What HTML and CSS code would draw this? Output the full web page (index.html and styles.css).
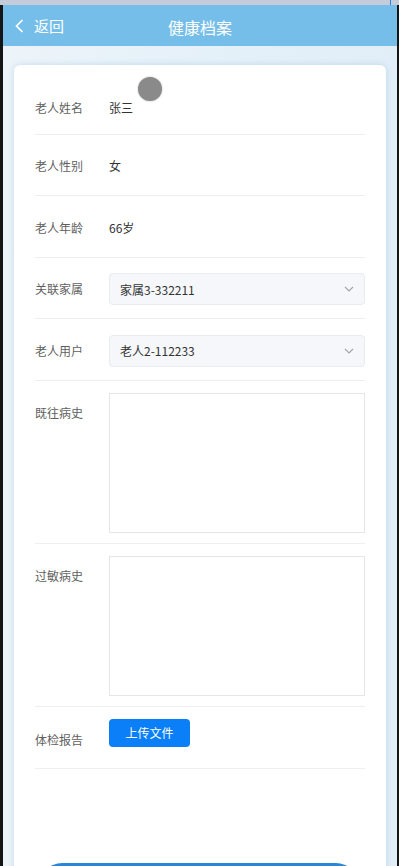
FILE: index.html
```html
<!DOCTYPE html>
<html lang="zh-CN">
<head>
  <meta charset="UTF-8" />
  <meta name="viewport" content="width=device-width, initial-scale=1.0"/>
  <title>健康档案</title>
  <link rel="stylesheet" href="styles.css">
</head>
<body>

  <div class="desk"><span class="desk-mark"></span></div>

  <div class="frame">
    <div class="header">
      <a class="back" href="#">
        <svg width="9" height="14" viewBox="0 0 9 14"><polyline points="7.5,1 1.5,7 7.5,13" fill="none" stroke="#fff" stroke-width="1.7"/></svg>
        <span>返回</span>
      </a>
      <div class="title">健康档案</div>
    </div>

    <div class="card">
      <div class="touch"></div>

      <div class="row row-first">
        <div class="label">老人姓名</div>
        <div class="value">张三</div>
      </div>
      <div class="row">
        <div class="label">老人性别</div>
        <div class="value">女</div>
      </div>
      <div class="row">
        <div class="label">老人年龄</div>
        <div class="value">66岁</div>
      </div>
      <div class="row">
        <div class="label">关联家属</div>
        <div class="select">
          <span>家属3-332211</span>
          <svg width="10" height="6" viewBox="0 0 10 6"><polyline points="1,1 5,5 9,1" fill="none" stroke="#a0a4aa" stroke-width="1.1"/></svg>
        </div>
      </div>
      <div class="row">
        <div class="label">老人用户</div>
        <div class="select">
          <span>老人2-112233</span>
          <svg width="10" height="6" viewBox="0 0 10 6"><polyline points="1,1 5,5 9,1" fill="none" stroke="#a0a4aa" stroke-width="1.1"/></svg>
        </div>
      </div>
      <div class="row row-top">
        <div class="label">既往病史</div>
        <div class="textarea"></div>
      </div>
      <div class="row row-top">
        <div class="label">过敏病史</div>
        <div class="textarea"></div>
      </div>
      <div class="row row-upload">
        <div class="label">体检报告</div>
        <button class="upload">上传文件</button>
      </div>

      <button class="submit"></button>
    </div>
  </div>

</body>
</html>
```

FILE: styles.css
```css
body {
  margin: 0;
  font-family: "Noto Sans CJK SC", "Noto Sans", sans-serif;
  background: linear-gradient(#c3ccd8, #aab6c6);
}
.desk {
  height: 5px;
  display: flex;
  justify-content: flex-end;
  padding-right: 8px;
}
.desk-mark {
  width: 1px;
  background: #2a7de1;
}
.frame {
  height: 861px;
  overflow: hidden;
  border-left: 3px solid #151515;
  border-right: 2px solid #151515;
  background: linear-gradient(90deg, #edf4f9, #e6f1f9 40%, #e1eef8);
}
.header {
  height: 41px;
  background: #75bee9;
  display: flex;
  align-items: center;
  position: relative;
}
.back {
  display: flex;
  align-items: center;
  gap: 10px;
  padding-left: 12px;
  color: #fff;
  text-decoration: none;
  font-size: 15px;
}
.title {
  position: absolute;
  left: 0;
  right: 0;
  text-align: center;
  color: #fff;
  font-size: 16px;
  padding-top: 2px;
  pointer-events: none;
}
.card {
  position: relative;
  margin: 19px 11px 0;
  padding: 8px 21px 0;
  height: 900px;
  background: #fff;
  border-radius: 6px;
  box-shadow: 0 0 6px rgba(120, 170, 210, 0.35);
}
.touch {
  position: absolute;
  left: 124px;
  top: 12px;
  width: 24px;
  height: 24px;
  border-radius: 50%;
  background: #8a8a8a;
  box-shadow: 0 0 2px rgba(0,0,0,0.3);
}
.row {
  display: flex;
  align-items: center;
  height: 61.5px;
  padding-top: 3px;
  box-sizing: border-box;
  border-bottom: 1px solid #efefef;
}
.row-first {
  padding-top: 9px;
}
.label {
  width: 74px;
  flex: none;
  font-size: 12px;
  line-height: 20px;
  color: #5f5f5f;
}
.value {
  font-size: 12px;
  line-height: 20px;
  color: #333;
}
.select {
  flex: 1;
  height: 32px;
  box-sizing: border-box;
  display: flex;
  align-items: center;
  justify-content: space-between;
  padding: 0 10px;
  background: #f5f7fa;
  border: 1px solid #e8ebf0;
  border-radius: 4px;
  font-size: 12px;
  color: #333;
}
.row-top {
  height: auto;
  align-items: flex-start;
  padding: 12px 0 10px;
}
.row-top .label {
  margin-top: 10px;
}
.textarea {
  flex: 1;
  height: 140px;
  box-sizing: border-box;
  border: 1px solid #e6e6e6;
  background: #fff;
}
.row-upload {
  height: 62px;
  align-items: flex-start;
  padding-top: 12px;
}
.row-upload .label {
  margin-top: 11px;
}
.upload {
  width: 81px;
  height: 28px;
  border: none;
  border-radius: 4px;
  background: #0a7ff7;
  color: #fff;
  font-family: inherit;
  font-size: 12px;
  cursor: pointer;
}
.submit {
  display: block;
  width: 318px;
  height: 44px;
  margin: 94px 0 0 5px;
  border: none;
  border-radius: 22px;
  background: linear-gradient(#2a86d8, #1a6fc0);
}
```
